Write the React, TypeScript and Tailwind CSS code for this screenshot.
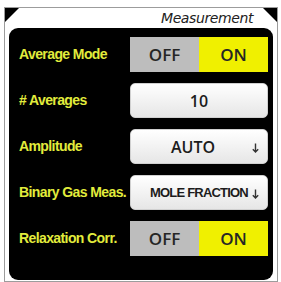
import React from "react";

function Toggle({ on }: { on: boolean }) {
  return (
    <div className="flex h-[35px] w-[138px] text-[17px] font-semibold font-['Open_Sans',sans-serif] text-[#262626]">
      <div className={on ? "flex w-[69px] items-center justify-center bg-[#bdbdbd]" : "flex w-[69px] items-center justify-center bg-[#f2f200]"}>
        OFF
      </div>
      <div className={on ? "flex w-[69px] items-center justify-center bg-[#f0f000]" : "flex w-[69px] items-center justify-center bg-[#bdbdbd]"}>
        ON
      </div>
    </div>
  );
}

function DownArrow() {
  return (
    <svg className="absolute right-[8px] top-[13px]" width="7" height="10" viewBox="0 0 7 10" fill="none">
      <path d="M3.5 0.5V9M0.8 6.2L3.5 9L6.2 6.2" stroke="#333" strokeWidth="1.4" />
    </svg>
  );
}

function Field({ value, arrow, narrow }: { value: string; arrow?: boolean; narrow?: boolean }) {
  return (
    <div className="relative flex h-[35px] w-[138px] items-center justify-center rounded-[5px] border border-[#d0d0d0] bg-gradient-to-b from-white to-[#e6e6e6] text-[#1c1c1c]">
      <span
        className={
          narrow
            ? "text-[13px] font-bold font-['Liberation_Sans',sans-serif] tracking-[-0.8px]"
            : arrow
              ? "pr-[12px] text-[16px] font-semibold font-['Open_Sans',sans-serif]"
              : "text-[16px] font-semibold font-['Open_Sans',sans-serif]"
        }
      >
        {value}
      </span>
      {arrow && <DownArrow />}
    </div>
  );
}

function Row({ label, children }: { label: string; children: React.ReactNode }) {
  return (
    <div className="flex h-[35px] items-center">
      <span className="w-[121px] shrink-0 pl-[10px] text-[14px] font-bold text-[#e2ec3c] font-['Liberation_Sans',sans-serif] tracking-[-0.6px] whitespace-nowrap">
        {label}
      </span>
      {children}
    </div>
  );
}

export default function App() {
  return (
    <div className="h-[282px] w-[281px] overflow-hidden bg-white pl-[4px] pt-[7px]">
      <div className="relative flex h-[275px] w-[274px] flex-col border border-[#9c9c9c] bg-white">
        <div className="absolute left-0 top-0 h-0 w-0 border-l-[7px] border-t-[7px] border-l-black border-t-black border-r-[7px] border-b-[7px] border-r-transparent border-b-transparent" />
        <div className="absolute right-0 top-0 h-0 w-0 border-r-[7px] border-t-[7px] border-r-black border-t-black border-l-[7px] border-b-[7px] border-l-transparent border-b-transparent" />
        <div className="flex h-[20px] items-center justify-end pr-[24px] text-[14px] italic text-[#222] font-['DejaVu_Sans',sans-serif] tracking-[-0.4px]">
          Measurement
        </div>
        <div className="mx-[4px] mb-[1px] flex flex-1 flex-col gap-[11px] rounded-[9px] bg-black pt-[9px]">
          <Row label="Average Mode">
            <Toggle on />
          </Row>
          <Row label="# Averages">
            <Field value="10" />
          </Row>
          <Row label="Amplitude">
            <Field value="AUTO" arrow />
          </Row>
          <Row label="Binary Gas Meas.">
            <Field value="MOLE FRACTION" arrow narrow />
          </Row>
          <Row label="Relaxation Corr.">
            <Toggle on />
          </Row>
        </div>
      </div>
    </div>
  );
}
